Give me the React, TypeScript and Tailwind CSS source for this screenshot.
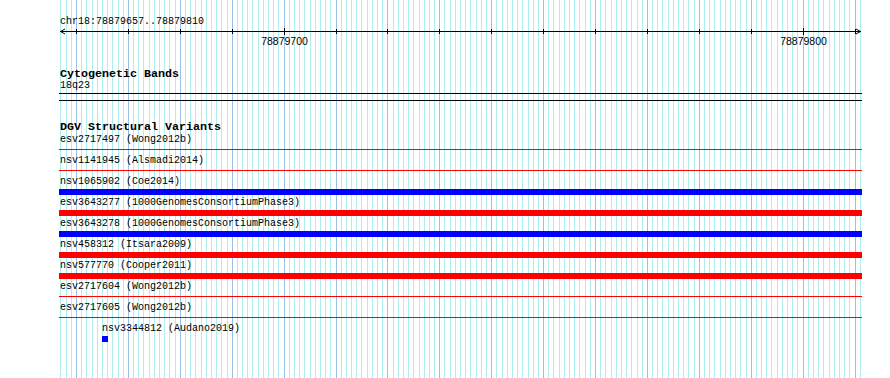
import React from "react";

const BASE = 5.19;
const X0 = 60.93; // page x of first base boundary
const LEFT = 59;

type Row = { label: string; kind: "line" | "bar" | "dot"; color: "red" | "blue" };

const rows: Row[] = [
  { label: "esv2717497 (Wong2012b)", kind: "line", color: "red" },
  { label: "nsv1141945 (Alsmadi2014)", kind: "line", color: "red" },
  { label: "nsv1065902 (Coe2014)", kind: "bar", color: "blue" },
  { label: "esv3643277 (1000GenomesConsortiumPhase3)", kind: "bar", color: "red" },
  { label: "esv3643278 (1000GenomesConsortiumPhase3)", kind: "bar", color: "blue" },
  { label: "nsv458312 (Itsara2009)", kind: "bar", color: "red" },
  { label: "nsv577770 (Cooper2011)", kind: "bar", color: "red" },
  { label: "esv2717604 (Wong2012b)", kind: "line", color: "red" },
  { label: "esv2717605 (Wong2012b)", kind: "line", color: "red" },
  { label: "nsv3344812 (Audano2019)", kind: "dot", color: "blue" },
];

function Grid() {
  const lines: { x: number; major: boolean }[] = [];
  for (let i = 0; i < 160; i++) {
    const x = Math.floor(X0 + BASE * i);
    if (x > 861) break;
    lines.push({ x, major: (i - 3) % 10 === 0 });
  }
  return (
    <div className="absolute inset-0 pointer-events-none">
      {lines.map((l, i) => (
        <div
          key={i}
          className={l.major ? "absolute top-0 bottom-0 w-px bg-[#98c0e8]" : "absolute top-0 bottom-0 w-px bg-[#aeeeee]"}
          style={{ left: l.x }}
        />
      ))}
    </div>
  );
}

function Ruler() {
  const ticks: { x: number; label?: string }[] = [];
  for (let k = 0; k < 16; k++) {
    const x = X0 + BASE * (3 + 10 * k) - LEFT;
    const pos = 78879660 + 10 * k;
    ticks.push({ x, label: pos % 100 === 0 ? String(pos) : undefined });
  }
  return (
    <div className="relative h-[24px] w-[803px]">
      <svg width="803" height="24" className="absolute left-0 top-0" shapeRendering="crispEdges">
        <line x1="1" y1="4.5" x2="802" y2="4.5" stroke="#000" strokeWidth="1" />
        <polyline points="6,2 1.5,4.5 6,7" fill="none" stroke="#000" strokeWidth="1" shapeRendering="auto" />
        <polyline points="797,2 801.5,4.5 797,7" fill="none" stroke="#000" strokeWidth="1" shapeRendering="auto" />
        {ticks.map((t, i) => (
          <line
            key={i}
            x1={Math.floor(t.x) + 0.5}
            x2={Math.floor(t.x) + 0.5}
            y1={t.label ? 1 : 2}
            y2={t.label ? 8 : 7}
            stroke="#000"
            strokeWidth="1"
          />
        ))}
      </svg>
      {ticks
        .filter((t) => t.label)
        .map((t, i) => (
          <span
            key={i}
            className="absolute top-[8px] -translate-x-1/2 text-[10.5px] leading-[12px] text-black"
            style={{ left: Math.floor(t.x) + 0.5, fontFamily: '"Liberation Sans", Arial, sans-serif' }}
          >
            {t.label}
          </span>
        ))}
    </div>
  );
}

export default function App() {
  const mono = { fontFamily: '"Liberation Mono", "DejaVu Sans Mono", monospace' };
  return (
    <div className="relative w-[890px] h-[378px] overflow-hidden bg-white text-black" style={mono}>
      <Grid />
      <div className="relative flex flex-col pl-[59px] w-[862px]">
        <div className="h-[16px]" />
        <div className="h-[11px] text-[10px] leading-[12px] pl-px">chr18:78879657..78879810</div>
        <Ruler />
        <div className="h-[17px]" />
        <div className="h-[12px] text-[11.67px] leading-[12px] font-bold pl-px">Cytogenetic Bands</div>
        <div className="h-[12px] text-[10px] leading-[12px] pl-px">18q23</div>
        <div className="h-[1px]" />
        <div className="h-[8px] border-t border-b border-black w-[803px]" />
        <div className="h-[19px]" />
        <div className="h-[14px] text-[11.67px] leading-[14px] font-bold pl-px">DGV Structural Variants</div>
        {rows.map((r, i) => (
          <div key={i} className="h-[21px] flex flex-col w-[803px]">
            <div className={r.kind === "dot" ? "h-[12px] text-[10px] leading-[12px] pl-[43px]" : "h-[12px] text-[10px] leading-[12px] pl-px"}>
              {r.label}
            </div>
            {r.kind === "line" && (
              <div className={r.color === "red" ? "mt-[3px] h-px bg-[#ff0000]" : "mt-[3px] h-px bg-[#0000ff]"} />
            )}
            {r.kind === "bar" && (
              <div className={r.color === "red" ? "mt-[1px] h-[6px] bg-[#ff0000]" : "mt-[1px] h-[6px] bg-[#0000ff]"} />
            )}
            {r.kind === "dot" && <div className="mt-[1px] ml-[43px] h-[6px] w-[6px] bg-[#0000ff]" />}
          </div>
        ))}
      </div>
    </div>
  );
}
